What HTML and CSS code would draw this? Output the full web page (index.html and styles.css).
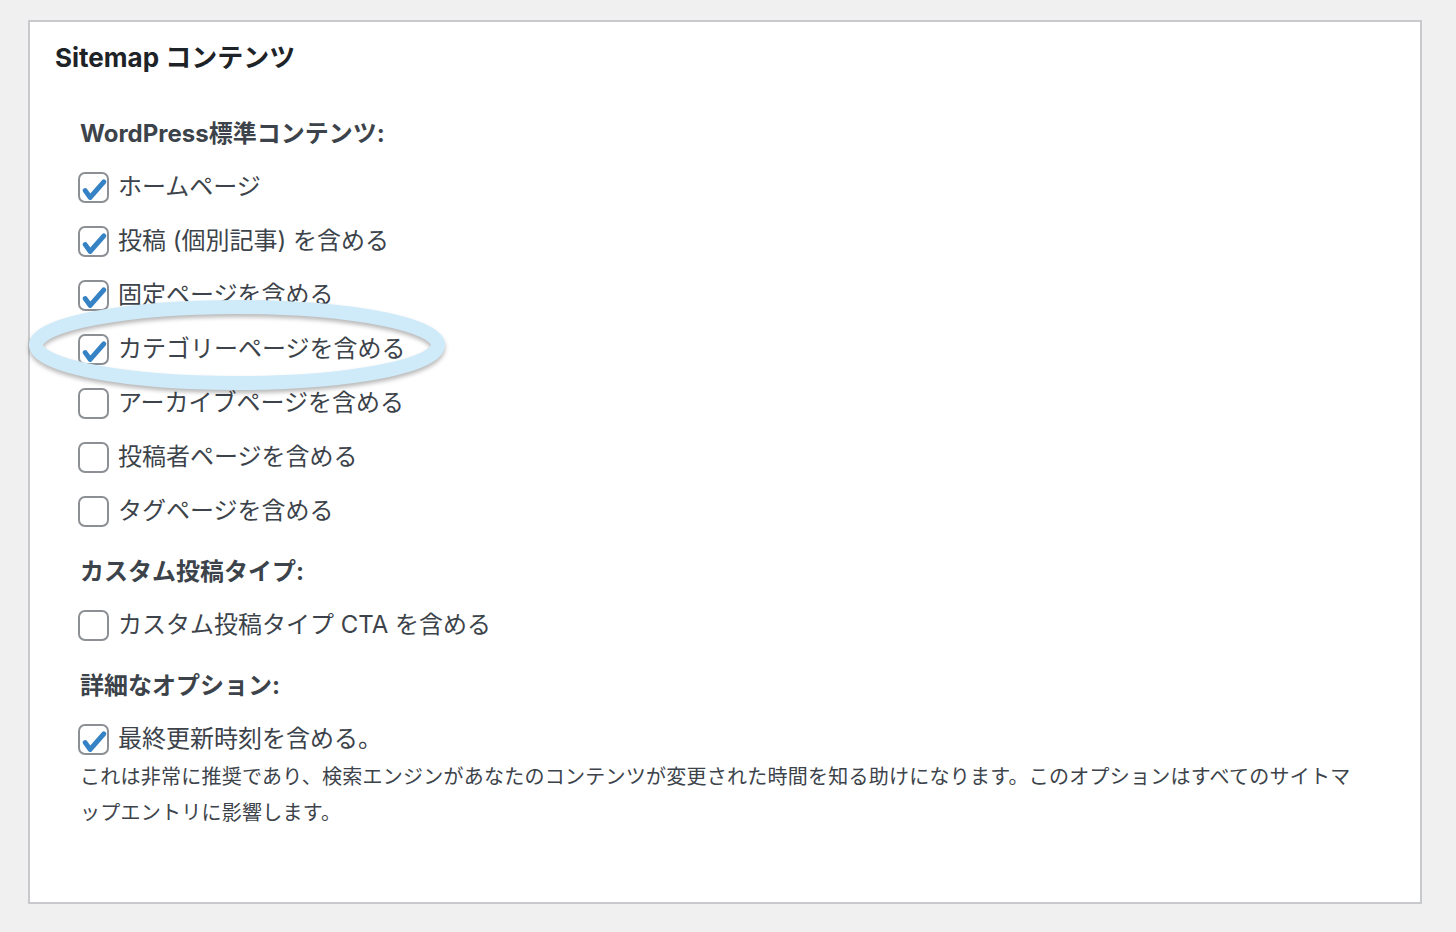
FILE: index.html
```html
<!DOCTYPE html>
<html lang="ja">
<head>
<meta charset="utf-8">
<title>Sitemap コンテンツ</title>
<link rel="stylesheet" href="styles.css">
</head>
<body>
<div class="postbox">
  <h2 class="postbox-title">Sitemap コンテンツ</h2>
  <div class="inside">
    <h3 class="group-title">WordPress標準コンテンツ:</h3>
    <label class="opt"><span class="cb checked"><svg viewBox="0 0 30 30"><polyline points="7,18 11.8,24.6 25,9.6"/></svg></span>ホームページ</label>
    <label class="opt"><span class="cb checked"><svg viewBox="0 0 30 30"><polyline points="7,18 11.8,24.6 25,9.6"/></svg></span>投稿 (個別記事) を含める</label>
    <label class="opt"><span class="cb checked"><svg viewBox="0 0 30 30"><polyline points="7,18 11.8,24.6 25,9.6"/></svg></span>固定ページを含める</label>
    <label class="opt"><span class="cb checked"><svg viewBox="0 0 30 30"><polyline points="7,18 11.8,24.6 25,9.6"/></svg></span>カテゴリーページを含める</label>
    <label class="opt"><span class="cb"></span>アーカイブページを含める</label>
    <label class="opt"><span class="cb"></span>投稿者ページを含める</label>
    <label class="opt"><span class="cb"></span>タグページを含める</label>

    <h3 class="group-title">カスタム投稿タイプ:</h3>
    <label class="opt"><span class="cb"></span>カスタム投稿タイプ CTA を含める</label>

    <h3 class="group-title">詳細なオプション:</h3>
    <label class="opt opt-tight"><span class="cb checked"><svg viewBox="0 0 30 30"><polyline points="7,18 11.8,24.6 25,9.6"/></svg></span>最終更新時刻を含める。</label>
    <p class="desc">これは非常に推奨であり、検索エンジンがあなたのコンテンツが変更された時間を知る助けになります。このオプションはすべてのサイトマップエントリに影響します。</p>
  </div>
  <svg class="highlight" viewBox="0 0 440 110" width="440" height="110" aria-hidden="true">
    <ellipse cx="217" cy="55" rx="201" ry="38"/>
  </svg>
</div>
</body>
</html>
```

FILE: styles.css
```css
html, body {
  margin: 0;
  padding: 0;
}

body {
  background: #f0f0f1;
  padding: 20px 0 0 28px;
  font-family: "Inter", "Noto Sans CJK JP", sans-serif;
  color: #3c434a;
}

.postbox {
  position: relative;
  box-sizing: border-box;
  width: 1394px;
  height: 884px;
  background: #fff;
  border: 2px solid #c8c9cc;
}

.postbox-title {
  margin: 0;
  padding: 18px 25px 0;
  font-size: 26px;
  line-height: 36px;
  font-weight: 700;
  color: #1d2327;
}

.inside {
  padding: 40px 0 0 50px;
}

.group-title {
  margin: 0 0 17px;
  font-size: 24px;
  line-height: 36px;
  font-weight: 700;
  color: #3c434a;
}

.opt + .group-title {
  margin-top: 25px;
}

.opt {
  display: flex;
  align-items: center;
  height: 36px;
  margin-bottom: 18px;
  font-size: 24px;
  line-height: 36px;
  color: #3c434a;
}

.opt-tight {
  margin-bottom: 2px;
}

.cb {
  box-sizing: border-box;
  flex: none;
  width: 31px;
  height: 31px;
  margin: 1px 9px 0 -2px;
  border: 2px solid #8c8f94;
  border-radius: 7px;
  background: #fff;
  position: relative;
}

.cb svg {
  position: absolute;
  left: -2px;
  top: -2px;
  width: 31px;
  height: 31px;
  fill: none;
  stroke: #3582c4;
  stroke-width: 4.8;
  stroke-linecap: round;
  stroke-linejoin: round;
}

.desc {
  margin: 0;
  width: 1290px;
  font-size: 20px;
  line-height: 36px;
  letter-spacing: 0.25px;
  color: #3c434a;
}

.highlight {
  position: absolute;
  left: -10px;
  top: 268px;
  overflow: visible;
  filter: drop-shadow(0 3px 2px rgba(0, 0, 0, 0.28));
}

.highlight ellipse {
  fill: none;
  stroke: #cfebf9;
  stroke-width: 14;
}
```
